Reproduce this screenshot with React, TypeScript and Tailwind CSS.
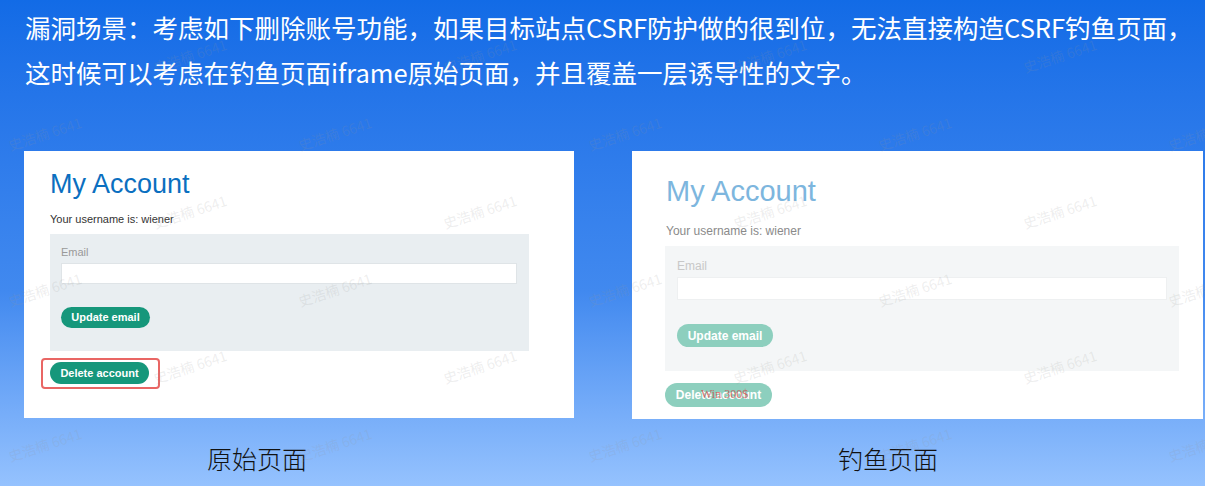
const marks: { x: number; y: number }[] = []
for (let k = -1; k < 4; k++) {
    for (let j = 0; j < 5; j++) {
        if (k >= 0) marks.push({ x: 190 + 290 * j, y: 56 + 155.5 * k })
        marks.push({ x: 45 + 290 * j, y: 134 + 155.5 * k })
    }
}

const OriginalPage = () => (
    <div className="w-[550px] h-[267px] bg-white pl-[26px] font-['Liberation_Sans',Arial,sans-serif]">
        <h1 className="pt-[19px] text-[27px] leading-[28px] text-[#0b6fc0]">My Account</h1>
        <p className="mt-[15px] text-[11px] leading-[13px] text-[#333]">Your username is: wiener</p>
        <div className="mt-[8px] w-[479px] h-[117px] bg-[#e9eef1] pl-[11px] pt-[12px]">
            <div className="text-[11px] leading-[13px] text-[#999]">Email</div>
            <div className="mt-[4px] w-[456px] h-[21px] bg-white border border-[#dfe4e7]" />
            <div className="mt-[23px] w-[89px] h-[21px] rounded-full bg-[#16977b] flex items-center justify-center text-[11px] font-bold text-white">
                Update email
            </div>
        </div>
        <div className="mt-[7px] ml-[-9px] inline-flex border-2 border-[#e96664] rounded-[4px] pl-[7px] pr-[9px] pt-[2px] pb-[3px]">
            <div className="w-[99px] h-[22px] rounded-full bg-[#16977b] flex items-center justify-center text-[11px] font-bold text-white">
                Delete account
            </div>
        </div>
    </div>
)

const PhishingPage = () => (
    <div className="w-[571px] h-[268px] bg-white pl-[33px] font-['Liberation_Sans',Arial,sans-serif]">
        <h1 className="pt-[26px] pl-[1px] text-[29px] leading-[29px] text-[#7db6de]">My Account</h1>
        <p className="mt-[18px] pl-[1px] text-[12px] leading-[14px] text-[#8a8a8a]">Your username is: wiener</p>
        <div className="mt-[8px] w-[514px] h-[125px] bg-[#f4f6f7] pl-[12px] pt-[13px]">
            <div className="text-[12px] leading-[14px] text-[#c8c8c8]">Email</div>
            <div className="mt-[4px] w-[490px] h-[23px] bg-white border border-[#eef0f1]" />
            <div className="mt-[24px] w-[96px] h-[23px] rounded-full bg-[#8dcfbe] flex items-center justify-center text-[12px] font-bold text-white">
                Update email
            </div>
        </div>
        <div className="relative mt-[12px] w-[107px] h-[24px] rounded-full bg-[#8dcfbe] flex items-center justify-center text-[12px] font-bold text-white">
            Delete account
            <span className="absolute left-[36px] top-[4px] text-[12px] leading-[14px] font-normal text-[#d04a48]/80 font-['Liberation_Serif',serif] whitespace-nowrap">
                Win 300$
            </span>
        </div>
    </div>
)

export default function App() {
    return (
        <div className="relative w-[1205px] h-[486px] overflow-hidden bg-gradient-to-b from-[#126be6] via-[#4189ef] via-60% to-[#95c2fe] font-['Noto_Sans_CJK_SC','Noto_Sans',sans-serif]">
            <div className="pl-[25px] pt-[4px] text-white text-[25.5px] leading-[45px] whitespace-nowrap">
                <div>漏洞场景：考虑如下删除账号功能，如果目标站点CSRF防护做的很到位，无法直接构造CSRF钓鱼页面，</div>
                <div>这时候可以考虑在钓鱼页面iframe原始页面，并且覆盖一层诱导性的文字。</div>
            </div>

            <div className="mt-[57px] pl-[24px] flex gap-[58px]">
                <OriginalPage />
                <PhishingPage />
            </div>

            <div className="mt-[24px] flex text-[25px] leading-[30px] font-light text-[#111]">
                <div className="w-[631px] pl-[207px]">原始页面</div>
                <div className="pl-[207px]">钓鱼页面</div>
            </div>

            <div className="pointer-events-none absolute inset-0">
                {marks.map((m, i) => (
                    <span
                        key={i}
                        className="absolute -translate-x-1/2 -translate-y-1/2 -rotate-[18deg] whitespace-nowrap text-[14px] text-[rgba(150,150,150,0.17)]"
                        style={{ left: m.x, top: m.y }}
                    >
                        史浩楠 6641
                    </span>
                ))}
            </div>
        </div>
    )
}
